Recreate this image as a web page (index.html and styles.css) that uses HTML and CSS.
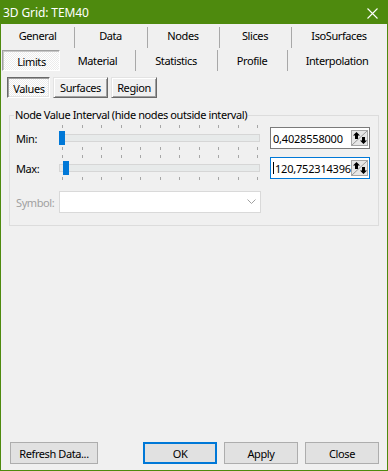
FILE: index.html
```html
<!DOCTYPE html>
<html>
<head>
<meta charset="utf-8">
<link rel="stylesheet" href="styles.css">
</head>
<body>
<div class="window">
  <div class="titlebar">
    <span class="title">3D Grid: TEM40</span>
    <svg class="close" width="11" height="11" viewBox="0 0 11 11"><path d="M0.5 0.5 L10.5 10.5 M10.5 0.5 L0.5 10.5" stroke="#fff" stroke-width="1.1" fill="none"/></svg>
  </div>
  <div class="tabrow row1">
    <div class="tab w73">General</div>
    <div class="tab w73 sep">Data</div>
    <div class="tab w72 sep">Nodes</div>
    <div class="tab w72 sep">Slices</div>
    <div class="tab grow sep">IsoSurfaces</div>
  </div>
  <div class="tabrow row2">
    <div class="tab sel w59"><span class="selbox">Limits</span></div>
    <div class="tab w75">Material</div>
    <div class="tab w82 sep">Statistics</div>
    <div class="tab w70 sep">Profile</div>
    <div class="tab grow sep">Interpolation</div>
  </div>
  <div class="page">
    <div class="subtabs">
      <div class="sbtn pressed b-values">Values</div>
      <div class="sbtn raised b-surfaces">Surfaces</div>
      <div class="sbtn raised b-region">Region</div>
    </div>
    <fieldset class="group">
      <legend>Node Value Interval (hide nodes outside interval)</legend>
      <div class="vrow">
        <span class="lbl">Min:</span>
        <div class="slider">
          <div class="ticks"><i></i><i></i><i></i><i></i><i></i><i></i><i></i><i></i><i></i><i></i><i></i></div>
          <div class="track"></div>
          <div class="ticks"><i></i><i></i><i></i><i></i><i></i><i></i><i></i><i></i><i></i><i></i><i></i></div>
          <div class="thumb" style="left:0px"></div>
        </div>
        <div class="edit">
          <span class="val">0,4028558000</span>
          <svg class="spin" width="17" height="16" viewBox="0 0 17 16"><rect x="0.5" y="0.5" width="16" height="15" fill="#e6e6e6" stroke="#a6a6a6"/><line x1="1" y1="15" x2="16" y2="1" stroke="#9a9a9a"/><path d="M5.5 2 L9 5.5 H7 V9 H4 V5.5 H2 Z" fill="#000"/><path d="M12.5 14 L16 10.5 H14 V7 H11 V10.5 H9 Z" fill="#000"/></svg>
        </div>
      </div>
      <div class="vrow">
        <span class="lbl">Max:</span>
        <div class="slider">
          <div class="ticks"><i></i><i></i><i></i><i></i><i></i><i></i><i></i><i></i><i></i><i></i><i></i></div>
          <div class="track"></div>
          <div class="ticks"><i></i><i></i><i></i><i></i><i></i><i></i><i></i><i></i><i></i><i></i><i></i></div>
          <div class="thumb" style="left:4px"></div>
        </div>
        <div class="edit focus">
          <span class="val"><span class="caret"></span>120,752314396</span>
          <svg class="spin" width="17" height="16" viewBox="0 0 17 16"><rect x="0.5" y="0.5" width="16" height="15" fill="#e6e6e6" stroke="#a6a6a6"/><line x1="1" y1="15" x2="16" y2="1" stroke="#9a9a9a"/><path d="M5.5 2 L9 5.5 H7 V9 H4 V5.5 H2 Z" fill="#000"/><path d="M12.5 14 L16 10.5 H14 V7 H11 V10.5 H9 Z" fill="#000"/></svg>
        </div>
      </div>
      <div class="srow">
        <span class="lbl dis">Symbol:</span>
        <div class="combo">
          <svg width="9" height="6" viewBox="0 0 9 6"><path d="M0.5 0.5 L4.5 4.5 L8.5 0.5" stroke="#a0a0a0" fill="none"/></svg>
        </div>
      </div>
    </fieldset>
  </div>
  <div class="footer">
    <div class="btn w-refresh">Refresh Data...</div>
    <div class="spacer"></div>
    <div class="btn default">OK</div>
    <div class="btn">Apply</div>
    <div class="btn">Close</div>
  </div>
</div>
</body>
</html>
```

FILE: styles.css
```css
* { box-sizing: border-box; }
html, body { margin: 0; padding: 0; }
body {
  width: 388px;
  height: 471px;
  background: #f0f0f0;
  font-family: "Noto Sans", "Open Sans", sans-serif;
  font-size: 11px;
  letter-spacing: -0.4px;
  color: #000;
  overflow: hidden;
}
.window {
  width: 388px;
  height: 471px;
  border: 1px solid #4e8a0e;
  background: #f0f0f0;
  display: flex;
  flex-direction: column;
}
.titlebar {
  height: 23px;
  background: #4e8a0e;
  display: flex;
  align-items: center;
  padding-left: 2px;
  padding-right: 9px;
  flex: none;
}
.title {
  color: #fff;
  font-size: 12px;
  letter-spacing: -0.1px;
  flex: 1;
  line-height: 23px;
  margin-top: -1px;
}
.close { margin-top: 1px; }

.tabrow {
  display: flex;
  height: 24px;
  flex: none;
}
.tab {
  position: relative;
  display: flex;
  align-items: center;
  justify-content: center;
  height: 24px;
  line-height: 14px;
}
.tab.sep::before {
  content: "";
  position: absolute;
  left: 0;
  width: 1px;
  background: #a8a8a8;
}
.row1 .tab.sep::before { top: 3px; height: 21px; }
.row2 .tab.sep::before { top: 2px; height: 21px; }
.w73 { width: 73px; }
.w72 { width: 72px; }
.w59 { width: 59px; }
.w75 { width: 75px; }
.w82 { width: 82px; }
.w70 { width: 70px; }
.grow { flex: 1; }
.row2 .tab { padding-top: 1px; }
.tab.sel { justify-content: flex-start; align-items: flex-start; padding-top: 2px; }
.selbox {
  display: flex;
  align-items: center;
  justify-content: center;
  width: 59px;
  height: 21px;
  margin-left: 1px;
  padding-top: 2px;
  padding-left: 1px;
  border: 1px solid;
  border-color: #a0a0a0 #fff #fff #a0a0a0;
  box-shadow: inset 1px 1px #c8c8c8;
  background: repeating-conic-gradient(#ffffff 0 25%, #ececec 0 50%) 0 0 / 2px 2px;
}

.page { flex: 1; display: flex; flex-direction: column; }
.subtabs {
  display: flex;
  padding-left: 6px;
  margin-top: 5px;
  height: 21px;
}
.sbtn {
  height: 21px;
  display: flex;
  align-items: center;
  justify-content: center;
  border: 1px solid;
}
.raised {
  border-color: #e3e3e3 #696969 #696969 #e3e3e3;
  box-shadow: inset 1px 1px #fff, inset -1px -1px #a0a0a0;
  background: #f0f0f0;
}
.pressed {
  border-color: #696969 #fff #fff #696969;
  box-shadow: inset 1px 1px #a0a0a0, inset -1px -1px #e3e3e3;
  background: repeating-conic-gradient(#ffffff 0 25%, #ececec 0 50%) 0 0 / 2px 2px;
  padding-top: 2px;
  padding-left: 1px;
}
.b-values { width: 43px; }
.b-surfaces { width: 55px; margin-left: 3px; }
.b-region { width: 46px; margin-left: 3px; }

.group {
  margin: 9px 0 0 8px;
  width: 370px;
  border: 1px solid #dcdcdc;
  padding: 0 0 12px 6px;
  min-width: 0;
}
.group legend {
  padding: 0 1px;
  margin-left: -2px;
  line-height: 16px;
}
.vrow {
  display: flex;
  align-items: center;
  height: 30px;
}
.lbl { width: 43px; flex: none; }
.dis { color: #a0a0a0; }
.slider {
  position: relative;
  width: 203px;
  height: 30px;
  display: flex;
  flex-direction: column;
  flex: none;
}
.ticks {
  display: flex;
  justify-content: space-between;
  width: 196px;
  margin-left: 3px;
  height: 3px;
}
.ticks:first-child { margin-top: 2px; }
.ticks i { width: 1px; height: 3px; background: #a6a6a6; }
.track {
  margin-top: 6px;
  width: 201px;
  height: 8px;
  border: 1px solid #d6d6d6;
  background: #e7eaea;
}
.track + .ticks { margin-top: 5px; }
.thumb {
  position: absolute;
  top: 8px;
  width: 6px;
  height: 14px;
  background: #0078d7;
}
.edit {
  margin-left: 8px;
  width: 100px;
  height: 22px;
  border: 1px solid #7a7a7a;
  background: #fff;
  display: flex;
  align-items: center;
  padding: 0 1px 0 2px;
  flex: none;
}
.edit.focus { border-color: #0078d7; }
.val {
  flex: 1;
  overflow: hidden;
  white-space: nowrap;
  font-size: 11px;
  letter-spacing: -0.2px;
  display: flex;
  align-items: center;
}
.caret { display: inline-block; width: 1px; height: 12px; background: #000; margin-right: 1px; }
.spin { flex: none; }
.srow {
  display: flex;
  align-items: center;
  margin-top: 8px;
  height: 22px;
}
.combo {
  width: 202px;
  height: 22px;
  border: 1px solid #d9d9d9;
  background: #fff;
  display: flex;
  align-items: center;
  justify-content: flex-end;
  padding-right: 4px;
}

.footer {
  display: flex;
  padding: 0 8px 6px 9px;
  gap: 7px;
  flex: none;
}
.spacer { flex: 1; }
.btn {
  width: 74px;
  height: 22px;
  border: 1px solid #adadad;
  background: #e1e1e1;
  display: flex;
  align-items: center;
  justify-content: center;
}
.btn.default { border: 2px solid #0078d7; }
.btn.w-refresh { width: 88px; }
```
